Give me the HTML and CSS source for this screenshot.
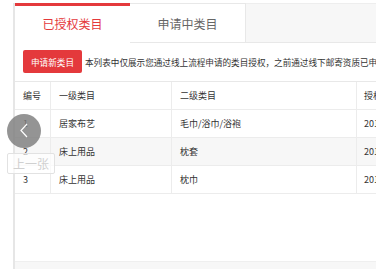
FILE: index.html
```html
<!DOCTYPE html>
<html lang="zh-CN">
<head>
<meta charset="utf-8">
<title>类目管理</title>
<link rel="stylesheet" href="styles.css">
</head>
<body>
<div class="page">
  <div class="panel">
    <div class="tabs">
      <div class="tab tab-active">已授权类目</div>
      <div class="tab">申请中类目</div>
      <div class="tab-filler"></div>
    </div>
    <div class="content">
      <div class="toolbar">
        <button class="btn-primary">申请新类目</button>
        <span class="notice">本列表中仅展示您通过线上流程申请的类目授权，之前通过线下邮寄资质已申请的类目请联系客服查询</span>
      </div>
      <div class="table">
        <div class="row row-head">
          <div class="cell">编号</div>
          <div class="cell">一级类目</div>
          <div class="cell">二级类目</div>
          <div class="cell">授权时间</div>
        </div>
        <div class="row">
          <div class="cell">1</div>
          <div class="cell">居家布艺</div>
          <div class="cell">毛巾/浴巾/浴袍</div>
          <div class="cell">2019-03-12</div>
        </div>
        <div class="row row-alt">
          <div class="cell">2</div>
          <div class="cell">床上用品</div>
          <div class="cell">枕套</div>
          <div class="cell">2019-03-12</div>
        </div>
        <div class="row">
          <div class="cell">3</div>
          <div class="cell">床上用品</div>
          <div class="cell">枕巾</div>
          <div class="cell">2019-03-12</div>
        </div>
      </div>
    </div>
    <div class="footer-band"></div>
  </div>

  <div class="prev-btn">
    <svg width="34" height="34" viewBox="0 0 34 34">
      <polyline points="20,10 14,16.5 20,23" fill="none" stroke="#fff" stroke-width="1.2"/>
    </svg>
  </div>
  <div class="prev-label">上一张</div>
</div>
</body>
</html>
```

FILE: styles.css
```css
* { box-sizing: border-box; }
html, body {
  margin: 0;
  padding: 0;
  background: #fff;
  overflow: hidden;
}
body {
  font-family: "Noto Sans CJK SC", "Noto Sans", sans-serif;
  color: #333;
}
.page {
  position: relative;
  width: 376px;
  height: 269px;
  overflow: hidden;
  padding-top: 3px;
}
.panel {
  margin-left: 13px;
  width: 520px;
  border-left: 2px solid #e6e6e6;
  height: 266px;
  display: flex;
  flex-direction: column;
}
.tabs {
  display: flex;
  height: 40px;
  flex: none;
}
.tab {
  width: 116px;
  flex: none;
  display: flex;
  align-items: center;
  justify-content: center;
  font-size: 12px;
  color: #666;
  background: #fff;
  border-top: 1px solid #e8e8e8;
  border-right: 1px solid #e8e8e8;
  border-bottom: 1px solid #e8e8e8;
}
.tab-active {
  width: 115px;
  color: #e4393c;
  border-top: 3px solid #e4393c;
  border-right: none;
  border-bottom: 1px solid #fff;
  padding-bottom: 2px;
}
.tab-filler {
  flex: 1;
  background: #f7f7f7;
  border-top: 1px solid #eeeeee;
  border-bottom: 1px solid #e8e8e8;
}
.content {
  height: 218px;
  flex: none;
  padding-top: 7px;
}
.toolbar {
  display: flex;
  align-items: center;
  padding-left: 8px;
  height: 23px;
  white-space: nowrap;
}
.btn-primary {
  height: 23px;
  width: 59px;
  padding: 0;
  border: none;
  border-radius: 2px;
  background: #e4393c;
  color: #fff;
  font-family: inherit;
  font-size: 8.6px;
  flex: none;
}
.notice {
  margin-left: 3px;
  font-size: 8.6px;
  color: #333;
}
.table {
  margin-top: 8px;
  border-top: 1px solid #e8e8e8;
}
.row {
  display: grid;
  grid-template-columns: 36px 121px 185px 160px;
  height: 28px;
  border-bottom: 1px solid #ececec;
  font-size: 9px;
  color: #333;
}
.row-alt { background: #f7f7f7; }
.cell {
  display: flex;
  align-items: center;
  padding-left: 8px;
  border-right: 1px solid #ececec;
  white-space: nowrap;
}
.cell:last-child { border-right: none; padding-left: 7px; }
.footer-band {
  flex: 1;
  background: #f7f7f7;
  border-top: 1px solid #efefef;
}
.prev-btn {
  position: absolute;
  left: 7px;
  top: 114px;
  width: 34px;
  height: 34px;
  border-radius: 50%;
  background: rgba(125, 125, 125, 0.82);
}
.prev-btn svg { display: block; }
.prev-label {
  position: absolute;
  left: 7px;
  top: 153px;
  width: 48px;
  height: 21px;
  border: 1px solid #e2e2e2;
  border-radius: 2px;
  background: rgba(255, 255, 255, 0.7);
  color: #d0d0d0;
  font-size: 12px;
  display: flex;
  align-items: center;
  justify-content: center;
}
```
